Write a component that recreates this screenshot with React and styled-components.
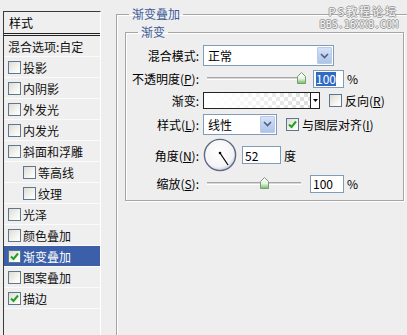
import React from "react";
import styled, { createGlobalStyle } from "styled-components";

const bg = "#eeeeee";
const xpBorder = "#7f9db9";
const groupLine = "#a5a5a5";
const legendBlue = "#3c5b98";

const GlobalStyle = createGlobalStyle`
  html, body {
    margin: 0;
    padding: 0;
    background: ${bg};
  }
  body {
    font-family: "Noto Sans CJK SC", "Noto Sans", sans-serif;
    font-size: 12px;
    color: #000;
  }
`;

const styleItems = [
  { label: "投影" },
  { label: "内阴影" },
  { label: "外发光" },
  { label: "内发光" },
  { label: "斜面和浮雕" },
  { label: "等高线", indent: true },
  { label: "纹理", indent: true },
  { label: "光泽" },
  { label: "颜色叠加" },
  { label: "渐变叠加", checked: true, selected: true },
  { label: "图案叠加" },
  { label: "描边", checked: true }
];

const CheckMark = () => (
  <svg width="9" height="9" viewBox="0 0 9 9">
    <path d="M1 4.5 L3.5 7 L8 1.5" fill="none" stroke="#21a121" strokeWidth="2" />
  </svg>
);

const CheckBox = ({ checked }) => <Box>{checked && <CheckMark />}</Box>;

const SliderThumb = () => (
  <svg width="9" height="12" viewBox="0 0 9 12">
    <defs>
      <linearGradient id="thumbFill" x1="0" y1="0" x2="0" y2="1">
        <stop offset="0" stopColor="#ffffff" />
        <stop offset="0.55" stopColor="#e8f2e4" />
        <stop offset="1" stopColor="#6cc05c" />
      </linearGradient>
    </defs>
    <path
      d="M0.5 4.5 L4.5 0.5 L8.5 4.5 L8.5 11.5 L0.5 11.5 Z"
      fill="url(#thumbFill)"
      stroke="#7c9a78"
    />
  </svg>
);

const Chevron = () => (
  <svg width="9" height="6" viewBox="0 0 9 6">
    <path d="M1 1 L4.5 4.5 L8 1" fill="none" stroke="#4d6185" strokeWidth="1.6" />
  </svg>
);

const ComboBox = ({ value, width }) => (
  <Combo width={width}>
    <ComboValue>{value}</ComboValue>
    <DropBtn>
      <Chevron />
    </DropBtn>
  </Combo>
);

const Slider = ({ pct }) => (
  <SliderBox>
    <Track />
    <Thumb style={{ left: `${4 + pct * 94 - 4.5}px` }}>
      <SliderThumb />
    </Thumb>
  </SliderBox>
);

const AngleDial = () => (
  <svg width="34" height="34" viewBox="0 0 34 34">
    <defs>
      <radialGradient id="dialFill" cx="0.45" cy="0.4" r="0.6">
        <stop offset="0" stopColor="#ffffff" />
        <stop offset="0.8" stopColor="#f4f4f6" />
        <stop offset="1" stopColor="#c8cdd8" />
      </radialGradient>
    </defs>
    <circle cx="17" cy="17" r="15.6" fill="url(#dialFill)" stroke="#5d6985" strokeWidth="1.4" />
    <circle cx="17" cy="15" r="1.3" fill="#000" />
    <line x1="17" y1="15" x2="25" y2="27" stroke="#000" strokeWidth="1.2" />
  </svg>
);

const App = () => (
  <>
    <GlobalStyle />
    <Page>
      <StyleList>
        <ListHeader>样式</ListHeader>
        <ListItem>混合选项:自定</ListItem>
        {styleItems.map(({ label, indent, checked, selected }) => (
          <ListItem key={label} indent={indent} selected={selected}>
            <CheckBox checked={checked} />
            <ItemText>{label}</ItemText>
          </ListItem>
        ))}
      </StyleList>

      <Panel>
        <Group>
          <Legend>渐变叠加</Legend>
          <InnerGroup>
            <Legend>渐变</Legend>

            <Row h={21} top={6}>
              <Label>混合模式:</Label>
              <ComboBox value="正常" width={131} />
            </Row>

            <Row h={19} top={3}>
              <Label>
                不透明度(<u>P</u>):
              </Label>
              <Slider pct={1} />
              <Field width={31} gap={8}>
                <Selected>100</Selected>
              </Field>
              <Unit>%</Unit>
            </Row>

            <Row h={18} top={3}>
              <Label>渐变:</Label>
              <GradientBox>
                <GradientFill />
                <GradientArrow>
                  <svg width="5" height="3" viewBox="0 0 5 3">
                    <path d="M0 0 L5 0 L2.5 3 Z" fill="#000" />
                  </svg>
                </GradientArrow>
              </GradientBox>
              <CheckWrap gap={9}>
                <CheckBox />
              </CheckWrap>
              <CheckLabel>
                反向(<u>R</u>)
              </CheckLabel>
            </Row>

            <Row h={20} top={5}>
              <Label>
                样式(<u>L</u>):
              </Label>
              <ComboBox value="线性" width={74} />
              <CheckWrap gap={9}>
                <CheckBox checked />
              </CheckWrap>
              <CheckLabel>
                与图层对齐(<u>I</u>)
              </CheckLabel>
            </Row>

            <Row h={34} top={4}>
              <Label>
                角度(<u>N</u>):
              </Label>
              <AngleDial />
              <Field width={39} gap={5}>
                52
              </Field>
              <Unit>度</Unit>
            </Row>

            <Row h={19} top={2}>
              <Label>
                缩放(<u>S</u>):
              </Label>
              <Slider pct={0.61} />
              <Field width={34} gap={5}>
                100
              </Field>
              <Unit>%</Unit>
            </Row>
          </InnerGroup>
        </Group>
      </Panel>

      <Watermark>
        <WmTitle>PS教程论坛</WmTitle>
        <WmUrl>BBS.16XX8.COM</WmUrl>
      </Watermark>
    </Page>
  </>
);

export default App;

const Page = styled.div`
  position: relative;
  display: flex;
  width: 407px;
  height: 335px;
  overflow: hidden;
  background: ${bg};
`;

const StyleList = styled.div`
  flex-shrink: 0;
  box-sizing: border-box;
  width: 98px;
  height: 340px;
  margin: 11px 0 0 3px;
  border-top: 1px solid #3a3a3a;
  border-left: 1px solid #3a3a3a;
  border-right: 1px solid #ffffff;
  background: #efefef;
`;

const ListHeader = styled.div`
  display: flex;
  align-items: center;
  height: 21px;
  padding-left: 5px;
  border-bottom: 3px double #222;
`;

const ListItem = styled.div`
  display: flex;
  align-items: center;
  height: 20px;
  padding-left: ${props => (props.indent ? "19px" : "4px")};
  border-bottom: 1px solid #fbfbfb;
  background: ${props => (props.selected ? "#3b5fa8" : "transparent")};
  color: ${props => (props.selected ? "#ffffff" : "#111")};
  white-space: nowrap;
`;

const ItemText = styled.span`
  margin-left: 2px;
`;

const Box = styled.span`
  box-sizing: border-box;
  display: inline-flex;
  align-items: center;
  justify-content: center;
  width: 13px;
  height: 13px;
  flex-shrink: 0;
  border: 1px solid #5f7690;
  background: linear-gradient(135deg, #dedbd2 0%, #f4f4f0 60%, #ffffff 100%);
`;

const Panel = styled.div`
  flex: 1;
  margin-left: 15px;
`;

const Group = styled.fieldset`
  box-sizing: border-box;
  width: 310px;
  height: 340px;
  margin: 7px 0 0 0;
  padding: 0 0 0 8px;
  border: 1px solid ${groupLine};
  border-right: none;
  border-bottom: none;
  box-shadow: inset 1px 1px 0 #ffffff;
`;

const Legend = styled.legend`
  margin-left: 4px;
  padding: 0 3px;
  line-height: 14px;
  color: ${legendBlue};
`;

const InnerGroup = styled.fieldset`
  box-sizing: border-box;
  width: 279px;
  margin: 4px 0 0 0;
  padding: 0 0 7px 8px;
  border: 1px solid ${groupLine};
  box-shadow: inset 1px 1px 0 #ffffff, 1px 1px 0 #ffffff;
`;

const Row = styled.div`
  display: flex;
  align-items: center;
  height: ${props => props.h}px;
  margin-top: ${props => props.top}px;
  white-space: nowrap;
`;

const Label = styled.div`
  display: flex;
  justify-content: flex-end;
  flex-shrink: 0;
  width: 65px;
  margin-right: 4px;

  u {
    text-decoration-thickness: 1px;
    text-underline-offset: 1px;
  }
`;

const Combo = styled.div`
  box-sizing: border-box;
  display: flex;
  align-items: stretch;
  width: ${props => props.width}px;
  height: 21px;
  border: 1px solid ${xpBorder};
  background: #ffffff;
`;

const ComboValue = styled.div`
  flex: 1;
  display: flex;
  align-items: center;
  padding-left: 4px;
`;

const DropBtn = styled.div`
  box-sizing: border-box;
  display: flex;
  align-items: center;
  justify-content: center;
  width: 15px;
  margin: 1px;
  border: 1px solid #b9cbe9;
  border-radius: 1px;
  background: linear-gradient(180deg, #d6e2f7 0%, #bccfee 60%, #aec4e9 100%);
`;

const SliderBox = styled.div`
  position: relative;
  width: 102px;
  height: 19px;
  flex-shrink: 0;
`;

const Track = styled.div`
  position: absolute;
  left: 4px;
  right: 4px;
  top: 8px;
  height: 1px;
  border-top: 1px solid #a6a6a6;
  border-bottom: 1px solid #ffffff;
  background: #d8d8d8;
`;

const Thumb = styled.div`
  position: absolute;
  top: 3px;
  width: 9px;
  height: 12px;
  line-height: 0;
`;

const Field = styled.div`
  box-sizing: border-box;
  display: flex;
  align-items: center;
  width: ${props => props.width}px;
  height: 18px;
  margin-left: ${props => props.gap}px;
  padding-left: 2px;
  border: 1px solid ${xpBorder};
  background: #ffffff;
`;

const Selected = styled.span`
  background: #316ac5;
  color: #ffffff;
  line-height: 14px;
`;

const Unit = styled.span`
  margin-left: 3px;
`;

const GradientBox = styled.div`
  box-sizing: border-box;
  display: flex;
  width: 117px;
  height: 17px;
  border: 1px solid #222;
  background: #ffffff;
`;

const GradientFill = styled.div`
  flex: 1;
  background:
    linear-gradient(90deg, #ffffff 0%, rgba(255, 255, 255, 0.85) 30%, rgba(255, 255, 255, 0) 100%),
    conic-gradient(#dcdcdc 25%, #ffffff 0 50%, #dcdcdc 0 75%, #ffffff 0) 0 0 / 8px 8px;
`;

const GradientArrow = styled.div`
  display: flex;
  align-items: center;
  justify-content: center;
  width: 8px;
  border-left: 1px solid #222;
  background: #ffffff;
`;

const CheckWrap = styled.span`
  display: inline-flex;
  margin-left: ${props => props.gap}px;
`;

const CheckLabel = styled.span`
  margin-left: 3px;
`;

const Watermark = styled.div`
  position: absolute;
  top: 5px;
  right: 9px;
  display: flex;
  flex-direction: column;
  align-items: flex-end;
  gap: 1px;
  color: #f6f6f6;
  text-shadow:
    1px 0 0 #9a9a9a,
    -1px 0 0 #9a9a9a,
    0 1px 0 #9a9a9a,
    0 -1px 0 #9a9a9a;
  pointer-events: none;
`;

const WmTitle = styled.div`
  font-size: 11px;
  line-height: 13px;
  letter-spacing: 2px;
`;

const WmUrl = styled.div`
  font-family: "DejaVu Sans Mono", monospace;
  font-size: 10px;
  line-height: 11px;
`;
